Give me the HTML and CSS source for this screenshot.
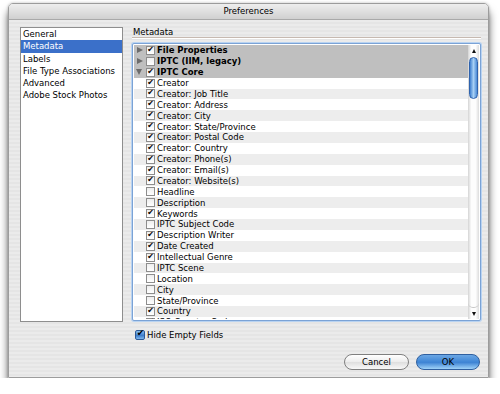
FILE: index.html
```html
<!DOCTYPE html>
<html lang="en">
<head>
    <meta charset="UTF-8" />
    <title>Preferences</title>
    <link rel="stylesheet" href="styles.css">
</head>
<body>
    <div class="window">
        <div class="titlebar">Preferences</div>
        <div class="content">
            <div class="main">
                <ul class="sidebar">
                    <li>General</li>
                    <li class="selected">Metadata</li>
                    <li>Labels</li>
                    <li>File Type Associations</li>
                    <li>Advanced</li>
                    <li>Adobe Stock Photos</li>
                </ul>

                <div class="panel">
                    <div class="panel-title">Metadata</div>
                    <div class="tree">
                        <div class="rows">
                            <div class="row group"><span class="tw"><i class="tri-r"></i></span><span class="cb on"></span><span>File Properties</span></div>
                            <div class="row group"><span class="tw"><i class="tri-r"></i></span><span class="cb"></span><span>IPTC (IIM, legacy)</span></div>
                            <div class="row group"><span class="tw"><i class="tri-d"></i></span><span class="cb on"></span><span>IPTC Core</span></div>
                            <div class="row"><span class="tw"></span><span class="cb on"></span><span>Creator</span></div>
                            <div class="row alt"><span class="tw"></span><span class="cb on"></span><span>Creator: Job Title</span></div>
                            <div class="row"><span class="tw"></span><span class="cb on"></span><span>Creator: Address</span></div>
                            <div class="row alt"><span class="tw"></span><span class="cb on"></span><span>Creator: City</span></div>
                            <div class="row"><span class="tw"></span><span class="cb on"></span><span>Creator: State/Province</span></div>
                            <div class="row alt"><span class="tw"></span><span class="cb on"></span><span>Creator: Postal Code</span></div>
                            <div class="row"><span class="tw"></span><span class="cb on"></span><span>Creator: Country</span></div>
                            <div class="row alt"><span class="tw"></span><span class="cb on"></span><span>Creator: Phone(s)</span></div>
                            <div class="row"><span class="tw"></span><span class="cb on"></span><span>Creator: Email(s)</span></div>
                            <div class="row alt"><span class="tw"></span><span class="cb on"></span><span>Creator: Website(s)</span></div>
                            <div class="row"><span class="tw"></span><span class="cb"></span><span>Headline</span></div>
                            <div class="row alt"><span class="tw"></span><span class="cb"></span><span>Description</span></div>
                            <div class="row"><span class="tw"></span><span class="cb on"></span><span>Keywords</span></div>
                            <div class="row alt"><span class="tw"></span><span class="cb"></span><span>IPTC Subject Code</span></div>
                            <div class="row"><span class="tw"></span><span class="cb on"></span><span>Description Writer</span></div>
                            <div class="row alt"><span class="tw"></span><span class="cb on"></span><span>Date Created</span></div>
                            <div class="row"><span class="tw"></span><span class="cb on"></span><span>Intellectual Genre</span></div>
                            <div class="row alt"><span class="tw"></span><span class="cb"></span><span>IPTC Scene</span></div>
                            <div class="row"><span class="tw"></span><span class="cb"></span><span>Location</span></div>
                            <div class="row alt"><span class="tw"></span><span class="cb"></span><span>City</span></div>
                            <div class="row"><span class="tw"></span><span class="cb"></span><span>State/Province</span></div>
                            <div class="row alt"><span class="tw"></span><span class="cb on"></span><span>Country</span></div>
                            <div class="row"><span class="tw"></span><span class="cb on"></span><span>ISO Country Code</span></div>
                        </div>
                        <div class="scrollbar">
                            <div class="sb-btn"><i class="arrow-up"></i></div>
                            <div class="sb-track"><div class="sb-thumb"></div></div>
                            <div class="sb-btn"><i class="arrow-down"></i></div>
                        </div>
                    </div>
                    <label class="hide-empty"><span class="aqua-cb"></span>Hide Empty Fields</label>
                </div>
            </div>

            <div class="buttons">
                <button class="btn">Cancel</button>
                <button class="btn default">OK</button>
            </div>
        </div>
    </div>
</body>
</html>
```

FILE: styles.css
```css
body {
    margin: 0;
    background: #fff;
    font-family: "DejaVu Sans", "Liberation Sans", sans-serif;
    font-size: 8.5px;
    color: #000;
}

.window {
    margin: 3px 0 0 8px;
    width: 481px;
    height: 375px;
    box-sizing: border-box;
    border: 1px solid #9c9c9c;
    border-radius: 5px 5px 0 0;
    background: repeating-linear-gradient(#ebebeb 0 2px, #e5e5e5 2px 4px);
    box-shadow: 0 8px 8px rgba(0, 0, 0, 0.6), 0 0 3px rgba(0, 0, 0, 0.25);
    display: flex;
    flex-direction: column;
    overflow: hidden;
}

.titlebar {
    flex: none;
    height: 15px;
    line-height: 14px;
    text-align: center;
    background: linear-gradient(#eeeeee, #d0d0d0);
    border-bottom: 1px solid #a9a9a9;
}

.content {
    flex: 1;
    display: flex;
    flex-direction: column;
    padding: 7px 7px 7px 11px;
}

.main {
    display: flex;
    align-items: flex-start;
    gap: 9px;
}

/* left list */
.sidebar {
    list-style: none;
    margin: 0;
    padding: 0;
    width: 103px;
    height: 295px;
    box-sizing: border-box;
    border: 1px solid #8e8e8e;
    background: #fff;
}

.sidebar li {
    height: 12.3px;
    line-height: 12.3px;
    padding-left: 2px;
    white-space: nowrap;
}

.sidebar li.selected {
    background: #3b70c9;
    color: #fff;
}

/* right panel */
.panel {
    flex: 1;
    display: flex;
    flex-direction: column;
}

.panel-title {
    height: 10px;
    line-height: 10px;
    padding-left: 1px;
    border-bottom: 1px solid #c6b9b0;
    box-shadow: 0 1px 0 #fff;
}

.tree {
    margin-top: 5px;
    height: 278px;
    box-sizing: border-box;
    border: 1px solid #7ba3d6;
    border-radius: 2px;
    box-shadow: 0 0 0 1px #b9d3f1;
    padding: 1px;
    background: #fff;
    display: flex;
}

.rows {
    flex: 1;
    overflow: hidden;
}

.row {
    height: 10.875px;
    display: flex;
    align-items: center;
    white-space: nowrap;
    background: #fff;
}

.row.alt {
    background: #ededed;
}

.row.group {
    background: #bfbfbf;
    font-weight: bold;
}

.tw {
    width: 12px;
    flex: none;
    display: flex;
    align-items: center;
}

.tri-r {
    margin-left: 3px;
    border-top: 3.5px solid transparent;
    border-bottom: 3.5px solid transparent;
    border-left: 6px solid #6c6c6c;
}

.tri-d {
    margin-left: 2px;
    border-left: 3.5px solid transparent;
    border-right: 3.5px solid transparent;
    border-top: 6px solid #6c6c6c;
}

.cb {
    flex: none;
    width: 9px;
    height: 9px;
    box-sizing: border-box;
    margin-right: 2px;
    border: 1px solid #8d8d8d;
    background: linear-gradient(#eeeeee, #ffffff);
    display: flex;
    align-items: center;
    justify-content: center;
    font-weight: normal;
}

.cb.on::after {
    content: "✔";
    font-size: 8px;
    line-height: 8px;
    margin-top: -1px;
    color: #000;
}

/* scrollbar */
.scrollbar {
    width: 11px;
    flex: none;
    display: flex;
    flex-direction: column;
    background: linear-gradient(to right, #d4d4d4, #fdfdfd 30%, #fdfdfd 70%, #dcdcdc);
}

.sb-btn {
    height: 11px;
    display: flex;
    align-items: center;
    justify-content: center;
}

.arrow-up {
    border-left: 2.5px solid transparent;
    border-right: 2.5px solid transparent;
    border-bottom: 4px solid #111;
}

.arrow-down {
    border-left: 2.5px solid transparent;
    border-right: 2.5px solid transparent;
    border-top: 4px solid #111;
}

.sb-track {
    flex: 1;
    padding: 1px 1px 0;
    border-bottom: 1px solid #c8c8c8;
    border-radius: 0 0 5px 5px;
}

.sb-thumb {
    height: 42px;
    box-sizing: border-box;
    border: 1px solid #2f63ad;
    border-radius: 5px;
    background: linear-gradient(to right, #3f7fcf, #a7d0f5 50%, #4b8ad6);
}

/* bottom controls */
.hide-empty {
    margin: 9px 0 0 3px;
    display: flex;
    align-items: center;
    gap: 2px;
    height: 10px;
}

.aqua-cb {
    width: 10px;
    height: 10px;
    box-sizing: border-box;
    border: 1px solid #2c5a98;
    border-radius: 2px;
    background: linear-gradient(#8cc0ef, #3d7dcc 55%, #7fb8ee);
    display: flex;
    align-items: center;
    justify-content: center;
}

.aqua-cb::after {
    content: "✔";
    font-size: 9px;
    line-height: 9px;
    margin: -3px 0 0 1px;
    color: #000;
}

.buttons {
    margin-top: auto;
    margin-right: 1px;
    display: flex;
    justify-content: flex-end;
    gap: 7px;
}

.btn {
    height: 16px;
    width: 65px;
    padding: 0;
    border: 1px solid #7f7f7f;
    border-radius: 8px;
    font-family: inherit;
    font-size: 8.5px;
    color: #000;
    background: linear-gradient(#ffffff, #ececec 50%, #dedede 51%, #f8f8f8);
}

.btn.default {
    width: 64px;
    border-color: #2f5f9f;
    background: linear-gradient(#6aa6e4, #3f86d6 50%, #3a80d2 51%, #9fd2f8);
}
```
